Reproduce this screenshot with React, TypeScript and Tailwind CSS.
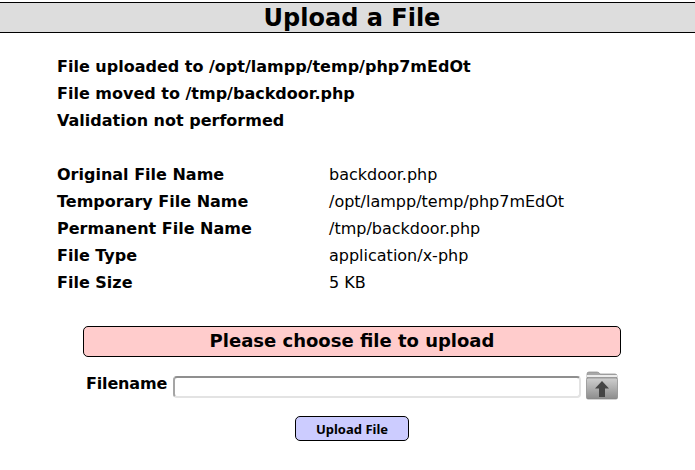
import React from 'react';

const fileInfo = [
  { label: 'Original File Name', value: 'backdoor.php' },
  { label: 'Temporary File Name', value: '/opt/lampp/temp/php7mEdOt' },
  { label: 'Permanent File Name', value: '/tmp/backdoor.php' },
  { label: 'File Type', value: 'application/x-php' },
  { label: 'File Size', value: '5 KB' },
];

const messages = [
  'File uploaded to /opt/lampp/temp/php7mEdOt',
  'File moved to /tmp/backdoor.php',
  'Validation not performed',
];

const FolderUpload = () => (
  <svg width="32" height="30" viewBox="0 0 32 30" className="block">
    <defs>
      <linearGradient id="folderFront" x1="0" y1="0" x2="0" y2="1">
        <stop offset="0" stopColor="#cfcfcf" />
        <stop offset="1" stopColor="#8c8c8c" />
      </linearGradient>
    </defs>
    <path d="M1 3 Q1 1 3 1 L11 1 Q13 1 14 3 L29 3 Q31 3 31 5 L31 8 L1 8 Z" fill="#a8a8a8" stroke="#8a8a8a" strokeWidth="0.7" />
    <rect x="1" y="4" width="30" height="2" fill="#ececec" />
    <rect x="0.5" y="7" width="31" height="21" rx="1.5" fill="url(#folderFront)" stroke="#858585" strokeWidth="0.7" />
    <path d="M16 10 L23 17.5 L19 17.5 L19 26 L13 26 L13 17.5 L9 17.5 Z" fill="#454545" />
  </svg>
);

export default function App() {
  return (
    <div className="h-[470px] w-[695px] overflow-hidden bg-white font-['DejaVu_Sans',sans-serif] text-black">
      <h1 className="mt-[2px] h-[31px] border-y border-black bg-[#dddddd] pl-[9px] text-center text-[24px] font-bold leading-[31px]">
        Upload a File
      </h1>

      <div className="mt-[20px] pl-[57px] text-[16px] font-bold leading-[27px]">
        {messages.map((message) => (
          <div key={message}>{message}</div>
        ))}
      </div>

      <div className="mt-[27px] pl-[57px] text-[16px] leading-[27px]">
        {fileInfo.map((row) => (
          <div key={row.label} className="flex">
            <div className="w-[272px] font-bold">{row.label}</div>
            <div>{row.value}</div>
          </div>
        ))}
      </div>

      <div className="mt-[30px] ml-[83px] h-[31px] w-[538px] rounded-[5px] border border-black bg-[#ffcccc] text-center text-[18px] font-bold leading-[28px]">
        Please choose file to upload
      </div>

      <div className="mt-[14px] ml-[86px] flex h-[30px] items-start">
        <label className="mt-[3px] w-[87px] text-[16px] font-bold leading-[19px] tracking-[-0.01em]">Filename</label>
        <input
          type="text"
          className="mt-[5px] h-[22px] w-[408px] rounded-[4px] border-2 border-t-[#8f8f8f] border-r-[#e3e3e3] border-b-[#e3e3e3] border-l-[#a5a5a5] bg-white"
        />
        <div className="ml-[5px]">
          <FolderUpload />
        </div>
      </div>

      <div className="mt-[15px] ml-[295px]">
        <button className="h-[25px] w-[114px] rounded-[5px] border border-black bg-[#ccccff] font-['Noto_Sans',sans-serif] text-[13px] font-bold leading-[22px]">
          Upload File
        </button>
      </div>
    </div>
  );
}
